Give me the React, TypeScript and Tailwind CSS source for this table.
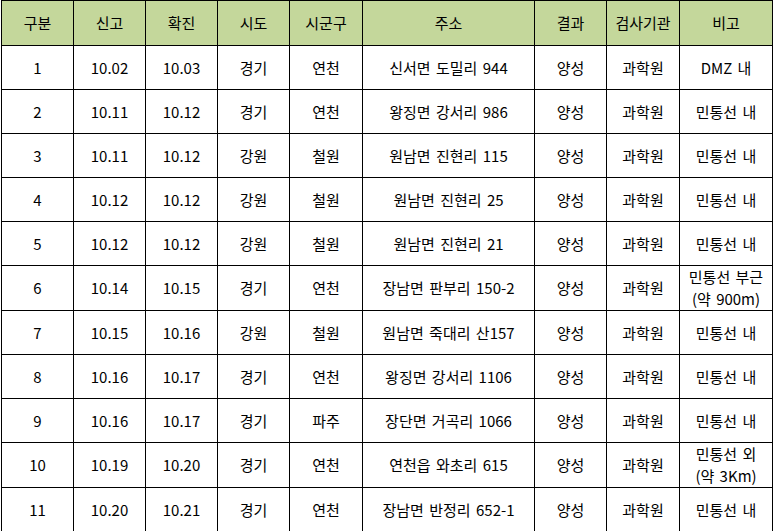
const COLS = [72, 72, 72, 72, 73, 172, 72, 73, 93];

const HEAD = ["구분", "신고", "확진", "시도", "시군구", "주소", "결과", "검사기관", "비고"];

const ROWS: string[][] = [
  ["1", "10.02", "10.03", "경기", "연천", "신서면 도밀리 944", "양성", "과학원", "DMZ 내"],
  ["2", "10.11", "10.12", "경기", "연천", "왕징면 강서리 986", "양성", "과학원", "민통선 내"],
  ["3", "10.11", "10.12", "강원", "철원", "원남면 진현리 115", "양성", "과학원", "민통선 내"],
  ["4", "10.12", "10.12", "강원", "철원", "원남면 진현리 25", "양성", "과학원", "민통선 내"],
  ["5", "10.12", "10.12", "강원", "철원", "원남면 진현리 21", "양성", "과학원", "민통선 내"],
  ["6", "10.14", "10.15", "경기", "연천", "장남면 판부리 150-2", "양성", "과학원", "민통선 부근\n(약 900m)"],
  ["7", "10.15", "10.16", "강원", "철원", "원남면 죽대리 산157", "양성", "과학원", "민통선 내"],
  ["8", "10.16", "10.17", "경기", "연천", "왕징면 강서리 1106", "양성", "과학원", "민통선 내"],
  ["9", "10.16", "10.17", "경기", "파주", "장단면 거곡리 1066", "양성", "과학원", "민통선 내"],
  ["10", "10.19", "10.20", "경기", "연천", "연천읍 와초리 615", "양성", "과학원", "민통선 외\n(약 3Km)"],
  ["11", "10.20", "10.21", "경기", "연천", "장남면 반정리 652-1", "양성", "과학원", "민통선 내"],
];

export default function App() {
  return (
    <div className="w-[774px] h-[531px] bg-white pl-[1px] font-['Noto_Sans_CJK_KR','Noto_Sans',sans-serif] text-[15px] text-black [word-spacing:2px]">
      <table className="table-fixed border-collapse border-[1.5px] border-black w-[771px]">
        <colgroup>
          {COLS.map((w, i) => (
            <col key={i} style={{ width: w }} />
          ))}
        </colgroup>
        <thead>
          <tr className="h-[45px] bg-[#c4d79b]">
            {HEAD.map((h) => (
              <th key={h} className="border border-black font-normal text-center p-0">
                {h}
              </th>
            ))}
          </tr>
        </thead>
        <tbody>
          {ROWS.map((r) => (
            <tr key={r[0]} className="h-[44px]">
              {r.map((c, i) => (
                <td key={i} className="border border-black text-center p-0 leading-[22px] whitespace-pre-line">
                  {c}
                </td>
              ))}
            </tr>
          ))}
        </tbody>
      </table>
    </div>
  );
}
